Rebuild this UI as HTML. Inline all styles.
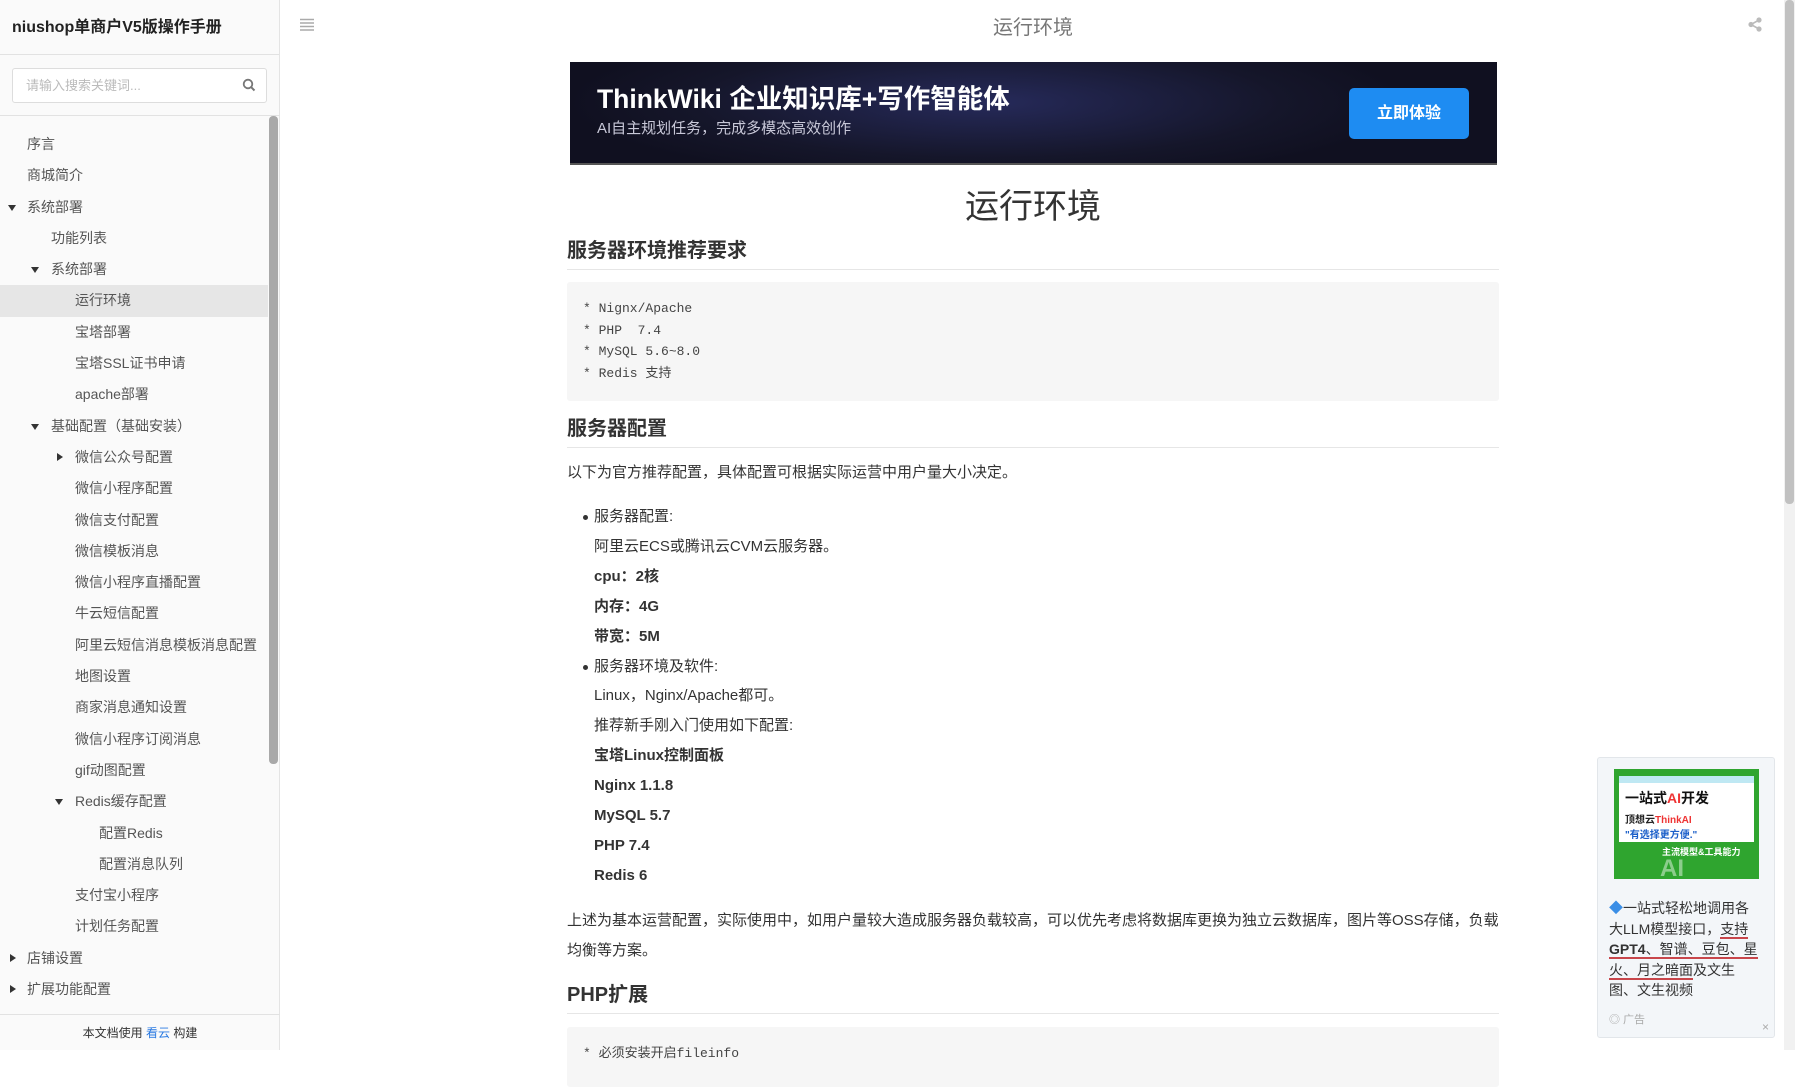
<!DOCTYPE html>
<html><head><meta charset="utf-8"><style>
*{margin:0;padding:0;box-sizing:border-box}
body{width:1795px;height:1050px;overflow:hidden;font-family:"Liberation Sans","Noto Sans CJK SC",sans-serif;color:#333;background:#fff;position:relative}
.side{position:absolute;left:0;top:0;width:280px;height:1050px;background:#fafafa;border-right:1px solid #e4e4e4}
.side .t{height:55px;border-bottom:1px solid #e2e2e2;font-weight:bold;font-size:16px;line-height:55px;padding-left:12px;color:#222}
.search{position:absolute;left:12px;top:68px;width:255px;height:35px;border:1px solid #ddd;border-radius:3px;background:#fff;font-size:13px;color:#bbb;line-height:33px;padding-left:13px}
.search svg{position:absolute;right:10px;top:9px}
.navline{position:absolute;left:0;top:115px;width:280px;border-top:1px solid #e2e2e2}
.nav{position:absolute;left:0;top:129px;width:268px;font-size:14px;color:#555}
.nav div{height:31.3px;line-height:31.3px;position:relative;white-space:nowrap}
.nav div.a{background:#e6e6e6}
.tri{position:absolute;top:13px;width:0;height:0;border-left:4.5px solid transparent;border-right:4.5px solid transparent;border-top:6px solid #333}
.tr{position:absolute;top:11px;width:0;height:0;border-top:4.5px solid transparent;border-bottom:4.5px solid transparent;border-left:6px solid #333}
.sb{position:absolute;left:269px;top:116px;width:9px;height:648px;background:#a9a9a9;border-radius:4px}
.foot{position:absolute;left:0;top:1014px;width:280px;height:36px;border-top:1px solid #e2e2e2;font-size:12px;text-align:center;line-height:36px;color:#333}
.foot span{color:#2a7ae2}
.top{position:absolute;left:281px;top:0;width:1503px;height:50px}
.ttl{position:absolute;left:0;width:1504px;top:12px;text-align:center;font-size:20px;color:#777}
.vs{position:absolute;left:1784px;top:0;width:11px;height:1050px;background:#f1f1f1}
.vs i{position:absolute;left:1px;top:0;width:9px;height:504px;background:#c1c1c1;border-radius:4px}
.banner{position:absolute;left:570px;top:62px;width:927px;height:103px;background:radial-gradient(ellipse 420px 80px at 45% 40%,#262a5a,#15162a 70%,#101020);border-bottom:2px solid #555}
.banner h3{position:absolute;left:27px;top:15px;font-size:26.5px;color:#fff;font-weight:bold}
.banner p{position:absolute;left:27px;top:55px;font-size:15px;color:#c8c8d8}
.banner b{position:absolute;left:779px;top:26px;width:120px;height:51px;background:#1e8cf2;border-radius:5px;color:#fff;font-size:16px;text-align:center;line-height:51px}
h1{position:absolute;left:567px;width:932px;top:179px;text-align:center;font-size:34px;font-weight:normal;color:#333}
h2{position:absolute;left:567px;width:932px;font-size:20px;color:#333;border-bottom:1px solid #e6e6e6;padding-bottom:6px}
pre{position:absolute;left:567px;width:932px;background:#f6f6f6;font-family:"Liberation Mono","Noto Sans CJK SC",monospace;font-size:13px;line-height:21.5px;padding:16px 16px;color:#444;border-radius:3px}
.p{position:absolute;left:567px;width:932px;font-size:15px;color:#333;line-height:30px}
ul{position:absolute;left:594px;top:502px;list-style:none;font-size:15px;line-height:29.9px;color:#333}
ul li{position:relative}
ul li.b:before{content:"";position:absolute;left:-11px;top:13px;width:5px;height:5px;border-radius:50%;background:#333}
.ad{position:absolute;left:1597px;top:757px;width:178px;height:281px;background:#f3f6f9;border:1px solid #e2e6ea;border-radius:3px}
.img{position:absolute;left:16px;top:11px;width:145px;height:110px;background:#2fa52f;overflow:hidden}
.img .w{position:absolute;left:5px;top:7px;width:135px;height:66px;background:#fff;border-top:7px solid #bfe8f3}
.adt{position:absolute;left:11px;top:140px;width:152px;font-size:14px;line-height:20.5px;color:#333}
.adt u{text-decoration:none;border-bottom:2px solid #c8464b}
</style></head><body>
<div class="side">
<div class="t">niushop单商户V5版操作手册</div>
<div class="search">请输入搜索关键词...<svg width="14" height="14" viewBox="0 0 14 14"><circle cx="6" cy="6" r="4.3" fill="none" stroke="#777" stroke-width="1.8"/><path d="M9.2 9.2L12.5 12.5" stroke="#777" stroke-width="2"/></svg></div>
<div class="navline"></div>
<div class="nav">
<div style="padding-left:27px">序言</div>
<div style="padding-left:27px">商城简介</div>
<div style="padding-left:27px"><i class="tri" style="left:8px"></i>系统部署</div>
<div style="padding-left:51px">功能列表</div>
<div style="padding-left:51px"><i class="tri" style="left:31px"></i>系统部署</div>
<div class="a" style="padding-left:75px">运行环境</div>
<div style="padding-left:75px">宝塔部署</div>
<div style="padding-left:75px">宝塔SSL证书申请</div>
<div style="padding-left:75px">apache部署</div>
<div style="padding-left:51px"><i class="tri" style="left:31px"></i>基础配置（基础安装）</div>
<div style="padding-left:75px"><i class="tr" style="left:57px"></i>微信公众号配置</div>
<div style="padding-left:75px">微信小程序配置</div>
<div style="padding-left:75px">微信支付配置</div>
<div style="padding-left:75px">微信模板消息</div>
<div style="padding-left:75px">微信小程序直播配置</div>
<div style="padding-left:75px">牛云短信配置</div>
<div style="padding-left:75px">阿里云短信消息模板消息配置</div>
<div style="padding-left:75px">地图设置</div>
<div style="padding-left:75px">商家消息通知设置</div>
<div style="padding-left:75px">微信小程序订阅消息</div>
<div style="padding-left:75px">gif动图配置</div>
<div style="padding-left:75px"><i class="tri" style="left:55px"></i>Redis缓存配置</div>
<div style="padding-left:99px">配置Redis</div>
<div style="padding-left:99px">配置消息队列</div>
<div style="padding-left:75px">支付宝小程序</div>
<div style="padding-left:75px">计划任务配置</div>
<div style="padding-left:27px"><i class="tr" style="left:10px"></i>店铺设置</div>
<div style="padding-left:27px"><i class="tr" style="left:10px"></i>扩展功能配置</div>
</div>
<div class="sb"></div>
<div class="foot">本文档使用 <span>看云</span> 构建</div>
</div>
<div class="top">
<svg style="position:absolute;left:19px;top:18px" width="14" height="13" viewBox="0 0 14 13"><path d="M0 1.5H14M0 5H14M0 8.5H14M0 12H14" stroke="#aaa" stroke-width="1.6"/></svg>
<div class="ttl" style="top:11px">运行环境</div>
<svg style="position:absolute;left:1467px;top:17px" width="14" height="15" viewBox="0 0 14 15"><circle cx="11" cy="3" r="2.6" fill="#bbb"/><circle cx="3" cy="7.5" r="2.6" fill="#bbb"/><circle cx="11" cy="12" r="2.6" fill="#bbb"/><path d="M11 3L3 7.5L11 12" stroke="#bbb" stroke-width="1.6" fill="none"/></svg>
</div>
<div class="vs"><i></i></div>
<div class="banner"><h3>ThinkWiki 企业知识库+写作智能体</h3><p>AI自主规划任务，完成多模态高效创作</p><b>立即体验</b></div>
<h1>运行环境</h1>
<h2 style="top:234px">服务器环境推荐要求</h2>
<pre style="top:282px;height:119px">* Nignx/Apache
* PHP  7.4
* MySQL 5.6~8.0
* Redis 支持</pre>
<h2 style="top:412px">服务器配置</h2>
<div class="p" style="top:458px">以下为官方推荐配置，具体配置可根据实际运营中用户量大小决定。</div>
<ul>
<li class="b">服务器配置:</li>
<li>阿里云ECS或腾讯云CVM云服务器。</li>
<li><b>cpu：2核</b></li>
<li><b>内存：4G</b></li>
<li><b>带宽：5M</b></li>
<li class="b">服务器环境及软件:</li>
<li>Linux，Nginx/Apache都可。</li>
<li>推荐新手刚入门使用如下配置:</li>
<li><b>宝塔Linux控制面板</b></li>
<li><b>Nginx 1.1.8</b></li>
<li><b>MySQL 5.7</b></li>
<li><b>PHP 7.4</b></li>
<li><b>Redis 6</b></li>
</ul>
<div class="p" style="top:906px">上述为基本运营配置，实际使用中，如用户量较大造成服务器负载较高，可以优先考虑将数据库更换为独立云数据库，图片等OSS存储，负载均衡等方案。</div>
<h2 style="top:978px">PHP扩展</h2>
<pre style="top:1027px;height:60px">* 必须安装开启fileinfo</pre>
<div class="ad">
<div class="img"><div class="w"><div style="position:absolute;left:6px;top:5px;font-size:14px;font-weight:bold;color:#111">一站式<span style="color:#e33">AI</span>开发</div><div style="position:absolute;left:6px;top:28px;font-size:10px;font-weight:bold;color:#222">顶想云<span style="color:#e33">ThinkAI</span></div><div style="position:absolute;left:6px;top:43px;font-size:10px;font-weight:bold;color:#1a5ec9">"有选择更方便."</div></div><div style="position:absolute;left:48px;top:76px;font-size:9px;font-weight:bold;color:#fff">主流模型&amp;工具能力</div><div style="position:absolute;left:46px;top:86px;font-size:24px;font-weight:bold;color:rgba(255,255,255,.45)">AI</div></div>
<div class="adt"><span style="color:#3a8ee6">◆</span>一站式轻松地调用各大LLM模型接口，<u>支持</u> <u><b>GPT4</b>、智谱、豆包、星</u> <u>火、月之暗面</u>及文生图、文生视频</div>
<div style="position:absolute;left:11px;top:253px;font-size:11px;color:#aaa">◎ 广告</div>
<div style="position:absolute;left:164px;top:262px;font-size:12px;color:#aaa">×</div>
</div>
</body></html>
